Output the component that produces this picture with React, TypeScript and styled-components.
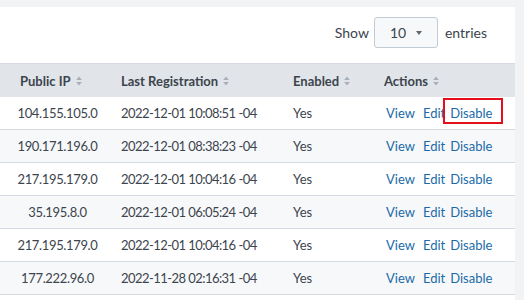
import React from "react";
import styled, { createGlobalStyle } from "styled-components";

const GlobalStyle = createGlobalStyle`
  body {
    margin: 0;
    background: #ffffff;
    font-family: "Lato", "Liberation Sans", sans-serif;
    color: #3c444d;
  }
`;

const Page = styled.div`
  width: 524px;
  height: 300px;
  box-sizing: border-box;
  padding: 7px 9px 0 0;
  background: #f2f3f5;
`;

const Panel = styled.div`
  background: #ffffff;
  height: 100%;
  overflow: hidden;
`;

const Toolbar = styled.div`
  height: 56px;
  box-sizing: border-box;
  padding: 10px 28px 0 0;
  display: flex;
  justify-content: flex-end;
  align-items: flex-start;
  font-size: 14px;
`;

const Label = styled.span<{ $ml?: number; $mr?: number }>`
  line-height: 31px;
  margin-left: ${(p) => p.$ml ?? 0}px;
  margin-right: ${(p) => p.$mr ?? 0}px;
`;

const Select = styled.div`
  width: 64px;
  height: 31px;
  box-sizing: border-box;
  border: 1px solid #c3cbd4;
  border-radius: 3px;
  background: #f7f8fa;
  display: flex;
  align-items: center;
  justify-content: space-between;
  padding: 0 15px 0 15px;
  font-size: 14px;
`;

const Caret = styled.span`
  width: 0;
  height: 0;
  border-left: 3.5px solid transparent;
  border-right: 3.5px solid transparent;
  border-top: 4px solid #5c6773;
`;

const COLS = "115px 171px 92px 1fr";

const HeaderRow = styled.div`
  display: grid;
  grid-template-columns: ${COLS};
  height: 34px;
  box-sizing: border-box;
  border-top: 1px solid #d6dae0;
  background: #e1e4e9;
  align-items: center;
  font-size: 13px;
  font-weight: 700;
  color: #3c444d;
`;

const HeaderCell = styled.div<{ $pl: number }>`
  padding-left: ${(p) => p.$pl}px;
  display: flex;
  align-items: center;
  gap: 5px;
`;

const Row = styled.div<{ $striped: boolean }>`
  display: grid;
  grid-template-columns: ${COLS};
  height: 33px;
  box-sizing: border-box;
  border-bottom: 1px solid #d6dae0;
  background: ${(p) => (p.$striped ? "#f7f8fa" : "#ffffff")};
  align-items: center;
  font-size: 13px;
`;

const Cell = styled.div<{ $pl?: number; $center?: boolean; $ls?: number }>`
  padding-left: ${(p) => p.$pl ?? 0}px;
  letter-spacing: ${(p) => p.$ls ?? 0}px;
  white-space: nowrap;
  display: flex;
  justify-content: ${(p) => (p.$center ? "center" : "flex-start")};
  align-items: center;
`;

const Link = styled.a<{ $mr?: number; $boxed?: boolean }>`
  color: #1a6aa8;
  text-decoration: none;
  margin-right: ${(p) => p.$mr ?? 0}px;
  position: relative;
  cursor: pointer;
  &::after {
    content: "";
    display: ${(p) => (p.$boxed ? "block" : "none")};
    position: absolute;
    left: -7px;
    right: -11px;
    top: -7px;
    height: 26px;
    box-sizing: border-box;
    border: 2.5px solid #e3101c;
  }
`;

const SortIcon = () => (
  <svg width="6" height="10" viewBox="0 0 6 10" aria-hidden>
    <path d="M3 0.5 L5.8 4 H0.2 Z" fill="#a7aeb7" />
    <path d="M3 9.5 L5.8 6 H0.2 Z" fill="#a7aeb7" />
  </svg>
);

const rows = [
  ["104.155.105.0", "2022-12-01 10:08:51 -04"],
  ["190.171.196.0", "2022-12-01 08:38:23 -04"],
  ["217.195.179.0", "2022-12-01 10:04:16 -04"],
  ["35.195.8.0", "2022-12-01 06:05:24 -04"],
  ["217.195.179.0", "2022-12-01 10:04:16 -04"],
  ["177.222.96.0", "2022-11-28 02:16:31 -04"],
];

export default function App() {
  return (
    <>
      <GlobalStyle />
      <Page>
        <Panel>
          <Toolbar>
            <Label $mr={5}>Show</Label>
            <Select>
              <span>10</span>
              <Caret />
            </Select>
            <Label $ml={7}>entries</Label>
          </Toolbar>
          <HeaderRow>
            <HeaderCell $pl={20}>Public IP <SortIcon /></HeaderCell>
            <HeaderCell $pl={6}>Last Registration <SortIcon /></HeaderCell>
            <HeaderCell $pl={7}>Enabled <SortIcon /></HeaderCell>
            <HeaderCell $pl={6}>Actions <SortIcon /></HeaderCell>
          </HeaderRow>
          {rows.map(([ip, date], i) => (
            <Row key={i} $striped={i % 2 === 1}>
              <Cell $center $ls={-0.35}>{ip}</Cell>
              <Cell $pl={6} $ls={-0.55}>{date}</Cell>
              <Cell $pl={7}>Yes</Cell>
              <Cell $pl={8}>
                <Link $mr={8}>View</Link>
                <Link $mr={5}>Edit</Link>
                <Link $boxed={i === 0}>Disable</Link>
              </Cell>
            </Row>
          ))}
        </Panel>
      </Page>
    </>
  );
}
